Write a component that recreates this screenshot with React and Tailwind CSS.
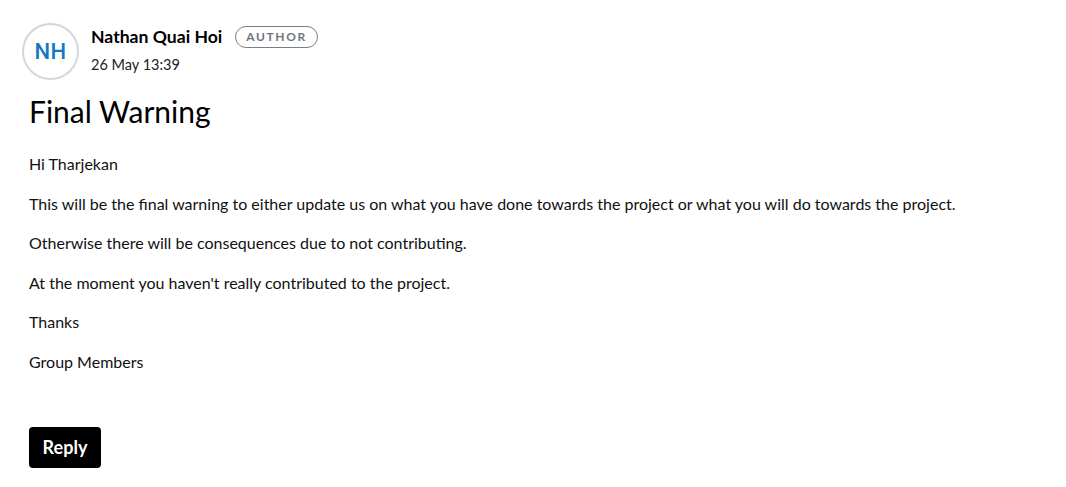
import React from 'react';

const lines = [
  'Hi Tharjekan',
  'This will be the final warning to either update us on what you have done towards the project or what you will do towards the project.',
  'Otherwise there will be consequences due to not contributing.',
  "At the moment you haven't really contributed to the project.",
  'Thanks',
  'Group Members',
];

export default function App() {
  return (
    <div className="min-h-screen bg-white text-black font-['Lato',sans-serif]">
      <div className="pl-[22px] pt-[23px]">
        {/* En-tête auteur */}
        <div className="flex items-start gap-3">
          <div className="w-[57px] h-[57px] rounded-full border-2 border-[#d4d7db] flex items-center justify-center shrink-0">
            <span className="text-[22px] font-medium text-[#1778c2] font-['Roboto',sans-serif] tracking-[0.5px]">NH</span>
          </div>
          <div className="pt-[1px]">
            <div className="flex items-center gap-[13px]">
              <span className="text-[17.6px] font-bold leading-[26px]">Nathan Quai Hoi</span>
              <span className="h-[22px] px-[10px] rounded-full border border-[#7a7f87] text-[12px] font-bold tracking-[1.6px] text-[#70757c] flex items-center">
                AUTHOR
              </span>
            </div>
            <div className="text-[14.5px] leading-[20px] mt-[5px] text-[#222]">26 May 13:39</div>
          </div>
        </div>

        {/* Contenu */}
        <div className="pl-[7px]">
          <h1 className="text-[30px] leading-[38px] mt-[12px]">Final Warning</h1>
          <div className="mt-[23px] flex flex-col gap-[18.6px] text-[16px] leading-[21px] text-[#111]">
            {lines.map((l, i) => (
              <p key={i}>{l}</p>
            ))}
          </div>
          <button className="mt-[55px] h-[41px] w-[72px] rounded-[4px] bg-black text-white font-bold text-[18px]">
            Reply
          </button>
        </div>
      </div>
    </div>
  );
}
